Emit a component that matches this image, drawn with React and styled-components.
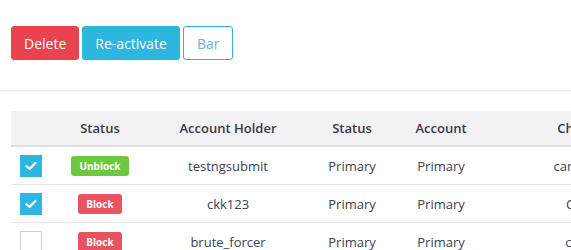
import React from 'react';
import styled, { createGlobalStyle } from 'styled-components';

const rows = [
  { id: 1, checked: true, blocked: false, holder: 'testngsubmit', status: 'Primary', account: 'Primary', channel: 'campaign' },
  { id: 2, checked: true, blocked: true, holder: 'ckk123', status: 'Primary', account: 'Primary', channel: 'Cable' },
  { id: 3, checked: false, blocked: true, holder: 'brute_forcer', status: 'Primary', account: 'Primary', channel: 'codes' },
];

const App = () => (
  <Page>
    <GlobalStyle />
    <Toolbar>
      <ActionButton variant="danger">Delete</ActionButton>
      <ActionButton variant="info">Re-activate</ActionButton>
      <ActionButton variant="outline">Bar</ActionButton>
    </Toolbar>
    <TableWrapper>
      <Table>
        <colgroup>
          <col style={{ width: 50 }} />
          <col style={{ width: 78 }} />
          <col style={{ width: 178 }} />
          <col style={{ width: 70 }} />
          <col style={{ width: 108 }} />
          <col style={{ width: 176 }} />
        </colgroup>
        <thead>
          <tr>
            <HeadCell />
            <HeadCell>Status</HeadCell>
            <HeadCell>Account Holder</HeadCell>
            <HeadCell>Status</HeadCell>
            <HeadCell>Account</HeadCell>
            <HeadCell>Channel</HeadCell>
          </tr>
        </thead>
        <tbody>
          {rows.map((row) => (
            <tr key={row.id}>
              <CheckCell>
                <Checkbox checked={row.checked}>
                  {row.checked && (
                    <svg width="12" height="10" viewBox="0 0 12 10">
                      <path d="M1.5 5.2 L4.6 8 L10.5 1.8" fill="none" stroke="#fff" strokeWidth="2.2" strokeLinecap="round" strokeLinejoin="round" />
                    </svg>
                  )}
                </Checkbox>
              </CheckCell>
              <Cell>
                <Badge blocked={row.blocked}>{row.blocked ? 'Block' : 'Unblock'}</Badge>
              </Cell>
              <Cell>{row.holder}</Cell>
              <Cell>{row.status}</Cell>
              <Cell>{row.account}</Cell>
              <Cell>{row.channel}</Cell>
            </tr>
          ))}
        </tbody>
      </Table>
    </TableWrapper>
  </Page>
);

const GlobalStyle = createGlobalStyle`
  body {
    margin: 0;
    background: #fff;
    font-family: 'Open Sans', 'Noto Sans', sans-serif;
    overflow: hidden;
  }
`;

const Page = styled.div`
  width: 571px;
  height: 250px;
  overflow: hidden;
`;

const Toolbar = styled.div`
  display: flex;
  gap: 3px;
  padding: 26px 11px 30px;
  border-bottom: 1px solid #e8e8ea;
`;

const buttonColors = {
  danger: { bg: '#e9434f', border: '#e9434f', color: '#fff', pad: 12 },
  info: { bg: '#2db6df', border: '#2db6df', color: '#fff', pad: 12 },
  outline: { bg: '#fff', border: '#2db6df', color: '#6fb2e2', pad: 13 },
};

const ActionButton = styled.button`
  height: 34px;
  padding: 0 ${(p) => buttonColors[p.variant].pad}px;
  font-family: 'Open Sans', sans-serif;
  font-size: 14px;
  border-radius: 3px;
  border: 1px solid ${(p) => buttonColors[p.variant].border};
  background: ${(p) => buttonColors[p.variant].bg};
  color: ${(p) => buttonColors[p.variant].color};
  cursor: pointer;
`;

const TableWrapper = styled.div`
  margin-top: 20px;
  padding-left: 11px;
`;

const Table = styled.table`
  border-collapse: collapse;
  table-layout: fixed;
  width: 660px;
  font-size: 13px;
  color: #3d4150;
`;

const HeadCell = styled.th`
  height: 34px;
  padding: 0;
  background: #f2f2f4;
  border-bottom: 2px solid #dddddf;
  font-weight: 600;
  color: #363a48;
  text-align: center;
`;

const Cell = styled.td`
  height: 37px;
  padding: 0;
  text-align: center;
  border-bottom: 1px solid #e5e5e8;
  white-space: nowrap;
`;

const CheckCell = styled(Cell)`
  text-align: left;
  padding-left: 9px;
`;

const Checkbox = styled.span`
  display: inline-flex;
  align-items: center;
  justify-content: center;
  vertical-align: middle;
  width: 22px;
  height: 22px;
  box-sizing: border-box;
  background: ${(p) => (p.checked ? '#2db6df' : '#fff')};
  border: 1px solid ${(p) => (p.checked ? '#2db6df' : '#d3d0cc')};
`;

const Badge = styled.span`
  display: inline-block;
  padding: 0 8px;
  line-height: 20px;
  border-radius: 3px;
  font-size: 10px;
  font-weight: 700;
  color: #fff;
  background: ${(p) => (p.blocked ? '#e9525f' : '#6cc93f')};
`;

export default App;
